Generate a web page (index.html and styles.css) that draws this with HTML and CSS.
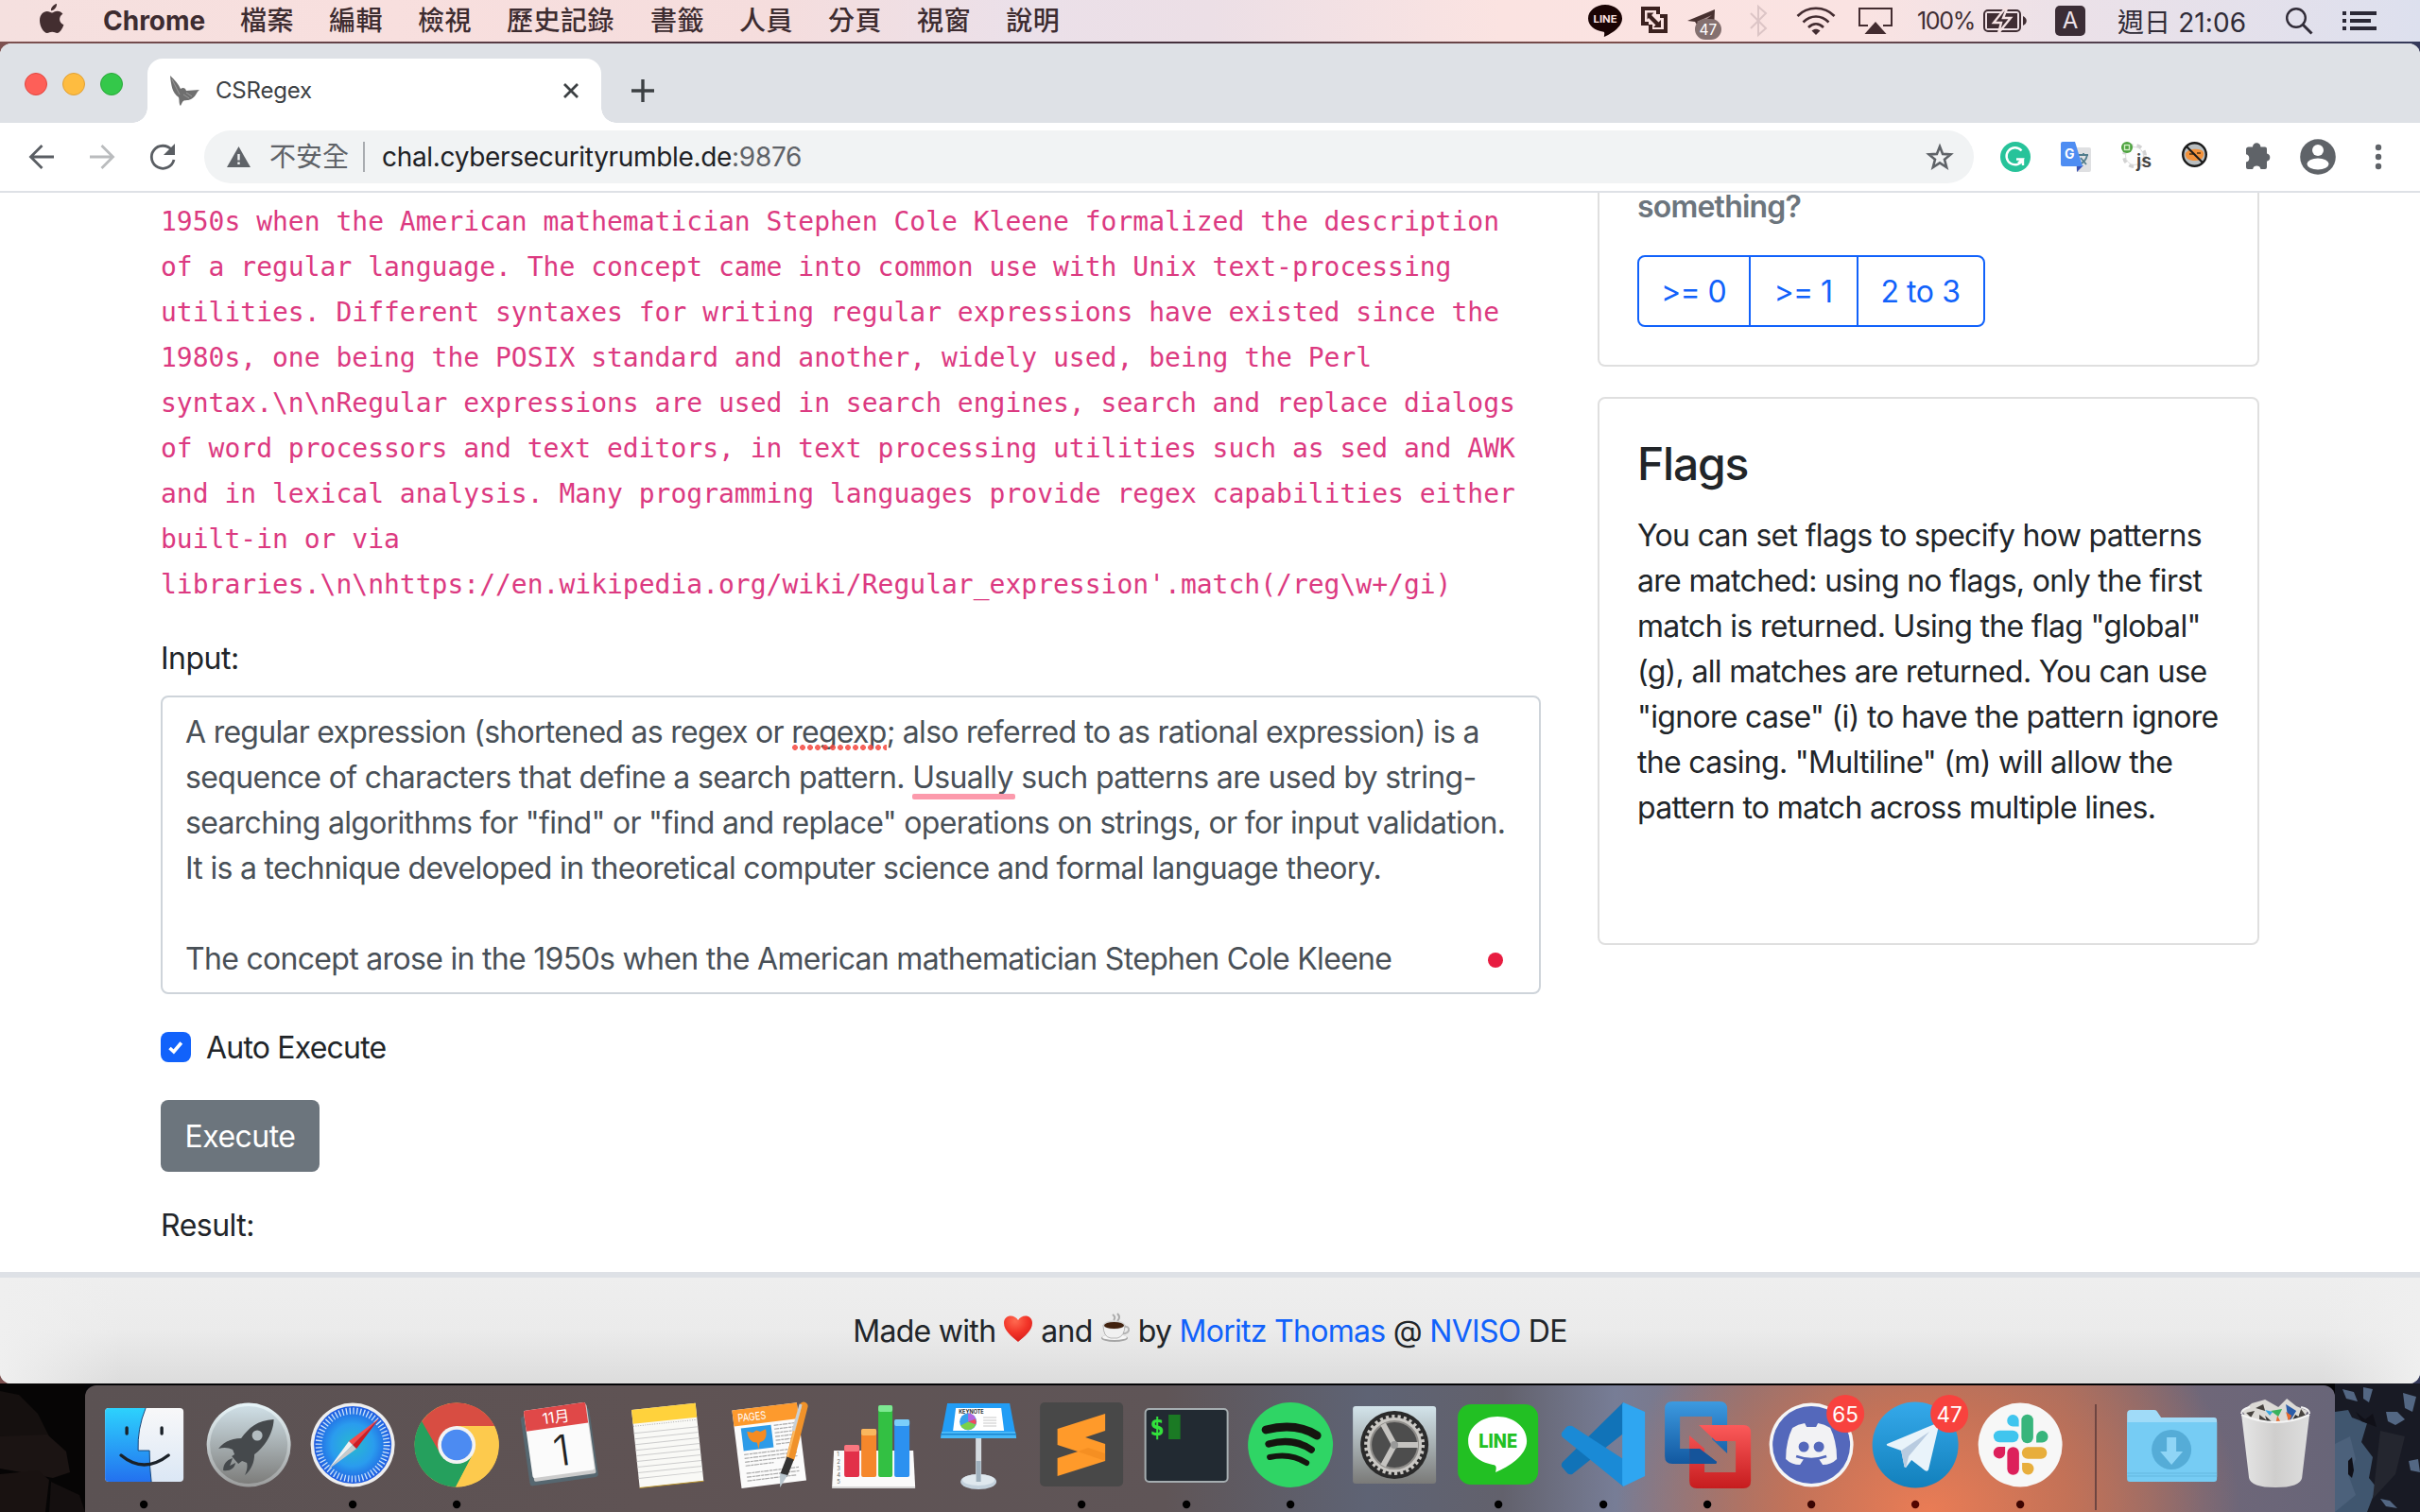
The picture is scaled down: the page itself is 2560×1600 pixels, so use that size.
FILE: index.html
```html
<!DOCTYPE html>
<html lang="zh-Hant">
<head>
<meta charset="utf-8">
<title>CSRegex</title>
<link rel="stylesheet" href="styles.css">
</head>
<body>
<header class="menubar">
  <svg class="apple" viewBox="0 0 26 32"><path d="M18 0c.4 3.200-2.600 7.400-6 7.300C11.600 4 14.800.600 18 0zM13 9.500c1.400 0 3-1.700 5.800-1.700 2.200 0 4.300 1.200 5.600 3-4.900 3-4.100 9.600 1 11.500C24 26.500 21.200 31 18.500 31c-2 0-2.900-1.200-5.300-1.200S9.700 31 7.900 31C4.300 31 0 24 0 17.800 0 11.500 3.900 8 7.700 8c2.400 0 4 1.500 5.300 1.500z"/></svg>
  <b class="app-name">Chrome</b>
  <nav class="menus"><span>檔案</span><span>編輯</span><span>檢視</span><span class="history">歷史記錄</span><span>書籤</span><span>人員</span><span>分頁</span><span>視窗</span><span>說明</span></nav>
  <div class="status">
    <svg class="s-line" viewBox="0 0 36 34"><path fill="#1a0404" d="M18 0C8 0 0 6.500 0 14.500 0 22 7 27.500 16.500 28.800c1 .2.800 2 .3 5.200C24 31 36 24 36 14.500 36 6.500 28 0 18 0z"/><text x="18" y="18.500" font-size="11" font-weight="700" text-anchor="middle" fill="#fbe3e1" textLength="25" lengthAdjust="spacingAndGlyphs">LINE</text></svg>
    <svg class="s-vm" viewBox="0 0 28 30"><g fill="none" stroke="#3b211f" stroke-width="4"><path d="M18 8V2H2v16h6M20 10h6v16H10v-7"/></g><path fill="#3b211f" d="M6.500 6.500h7L11 9l7.500 7.500L21 14v8h-8l2.500-2.500L8 12l-1.500 1.500z"/></svg>
    <svg class="s-tg" viewBox="0 0 38 34"><path fill="#47302f" d="M0 12L29 0l-1 22-9-6-6-3-3 3-2-3z"/><path d="M10 13l16-7-12 9" fill="#a98f8f"/><rect x="8" y="10" width="28" height="22" rx="11" fill="#84706f"/><text x="22" y="26.500" font-size="15.500" text-anchor="middle" fill="#fff">47</text></svg>
    <svg class="s-bt" viewBox="0 0 20 32" fill="none" stroke="#dcc5c6" stroke-width="2"><path d="M1 8l16 16-8 7V1l8 7L1 24"/></svg>
    <svg class="s-wifi" viewBox="0 0 42 30" fill="none" stroke="#432c30" stroke-width="2.600"><path d="M1.500 10C12-1 30-1 40.500 10M7.500 16.500c8-8 19-8 27 0M13 22c5-5 11-5 16 0"/><path stroke="none" fill="#432c30" d="M16.500 25.500c3-2.500 6-2.500 9 0L21 30z"/></svg>
    <svg class="s-air" viewBox="0 0 36 28"><path fill="none" stroke="#432c30" stroke-width="2" d="M10 19H1V1h34v18h-9"/><path fill="#432c30" d="M18 15L29.500 28h-23z"/></svg>
    <span class="pct">100%</span>
    <svg class="s-bat" viewBox="0 0 46 24"><rect x="1" y="1" width="38" height="22" rx="4" fill="none" stroke="#3f2d33" stroke-width="2"/><path fill="#3f2d33" d="M4 4h32v16H4zM42 7c5 2 5 8 0 10z"/><path d="M23-1L11 14h8l-3 11L29 9h-8l4-10z" fill="#3f2d33" stroke="#f5e2e3" stroke-width="2.400"/></svg>
    <span class="ime">A</span>
    <span class="clock">週日 21:06</span>
    <svg class="s-find" viewBox="0 0 30 28" fill="none" stroke="#302b37" stroke-width="2.400"><circle cx="11" cy="11" r="9.800"/><path d="M18 18l9.500 9.500" stroke-width="3"/></svg>
    <svg class="s-list" viewBox="0 0 36 20" fill="#2a2836"><path d="M0 0h4v4H0zM8 0h28v4H8zM0 8h4v4H0zM8 8h22v4H8zM0 16h4v4H0zM8 16h28v4H8z"/></svg>
  </div>
</header>

<main class="window">
  <div class="tabstrip">
    <div class="lights"><i class="red"></i><i class="amber"></i><i class="green"></i></div>
    <div class="tab">
      <svg class="favicon" viewBox="0 0 32 32"><path fill="#6f6f6f" d="M0 0c5 5 9 9 11 14 3-2 5-1 6 2l14-1c-4 3-3 7-9 10-4 2-7 0-9 3l-2 4c-2-2-1-6-2-9C2 18 1 10 0 0z"/><path d="M2 4l8 16M14 20l6 4M17 18l6 4" stroke="#999" fill="none"/></svg>
      <span class="tab-title">CSRegex</span>
      <svg class="close" viewBox="0 0 16 16"><path d="M1 1l14 14M15 1L1 15"/></svg>
    </div>
    <svg class="newtab" viewBox="0 0 24 24"><path d="M12 0v24M0 12h24"/></svg>
  </div>
  <div class="toolbar">
    <svg class="nav-ic" viewBox="0 0 28 28" stroke="#5a5e63"><path d="M27 14H3M14.500 2L2.500 14l12 12"/></svg>
    <svg class="nav-ic" viewBox="0 0 28 28" stroke="#babcbe"><path d="M1 14h24M13.500 2l12 12-12 12"/></svg>
    <svg class="nav-ic" viewBox="0 0 28 28" stroke="#5a5e63"><path d="M23.500 6.500A12 12 0 1 0 26 17"/><path d="M27 0v12H15z" fill="#5a5e63" stroke="none"/></svg>
    <div class="omnibox">
      <svg class="warn" viewBox="0 0 25 22"><path fill="#5f6368" d="M12.500 0L25 22H0z"/><path stroke="#f1f3f4" stroke-width="2.400" d="M12.500 8v6.500M12.500 16.500v2.600"/></svg>
      <span class="insecure">不安全</span><i class="sep"></i>
      <span class="url">chal.cybersecurityrumble.de<em>:9876</em></span>
      <svg class="star" viewBox="0 0 30 28"><path fill="none" stroke="#5f6368" stroke-width="2.600" d="M15 3l3.100 7.900 8.400.5-6.500 5.400 2.200 8.200-7.200-4.600L7.800 25l2.200-8.200-6.500-5.400 8.400-.5z"/></svg>
    </div>
    <div class="extensions">
      <svg viewBox="0 0 32 32"><circle cx="16" cy="16" r="16" fill="#27c39a"/><path fill="none" stroke="#fff" stroke-width="2.400" d="M22.500 9.500a9 9 0 1 0 1.500 9h-7M24 18.500V25M24 18.500l-5 4"/></svg>
      <svg viewBox="0 0 32 32"><path fill="#dfe0e2" d="M12 6h18q2 0 2 2v22q0 2-2 2H17z"/><path stroke="#527d8c" stroke-width="1.800" fill="none" d="M19 14h10M24 12v2M28 14c-1 5-4 8-8 10M21 17l6 7"/><path fill="#3a51b5" d="M17 25h7l-7 7z"/><path fill="#4e8df2" d="M2 0h13l8 26H2q-2 0-2-2V2q0-2 2-2z"/><text x="4" y="18" font-size="14" font-weight="700" fill="#fff">G</text></svg>
      <svg viewBox="0 0 32 32"><circle cx="14" cy="15" r="11" fill="#fff" stroke="#d2d2d2" stroke-width="4" stroke-dasharray="5 4"/><circle cx="14" cy="15" r="9.500" fill="#fdfdfd" stroke="#ddd"/><circle cx="6" cy="6" r="6" fill="#4da33f"/><rect x="3.500" y="3.500" width="5" height="5" fill="none" stroke="#d5f0c8" stroke-width="1.400"/><text x="16" y="27" font-size="19" font-weight="600" fill="#444" textLength="16" lengthAdjust="spacingAndGlyphs">js</text></svg>
      <svg viewBox="0 0 32 32"><circle cx="13.500" cy="13.500" r="12" fill="#b9bec0"/><path fill="#f3923b" d="M4 12c3-5 16-6 19-1 1 5-2 9-9 9-6 0-11-2-10-8z"/><path d="M8 13h4M16 12h4" stroke="#7c4a1a" stroke-width="2"/><circle cx="13.500" cy="13.500" r="12.300" fill="none" stroke="#1b1b1b" stroke-width="2.400"/><path d="M4.500 4.500l18 18" stroke="#1b1b1b" stroke-width="2.200"/></svg>
      <svg class="puzzle" viewBox="0 0 32 32"><path fill="#5f6368" d="M4.500 5.500H9a4.200 4.200 0 0 1 8.400 0H22q2 0 2 2v5a4.200 4.200 0 0 1 0 8.200V27q0 2-2 2h-4.500a4.300 4.300 0 0 0-8.400 0H4q-2 0-2-2v-5.500a4.200 4.200 0 0 0 0-8.200V7.500q.500-2 2.500-2z"/></svg>
      <svg class="avatar" viewBox="0 0 38 38"><circle cx="19" cy="19" r="18.800" fill="#5f6368"/><circle cx="19" cy="12" r="6" fill="#fff"/><ellipse cx="19" cy="26.500" rx="11.500" ry="6" fill="#fff"/></svg>
      <svg class="dots" viewBox="0 0 8 28" fill="#5f6368"><circle cx="4" cy="4" r="3.200"/><circle cx="4" cy="14" r="3.200"/><circle cx="4" cy="24" r="3.200"/></svg>
    </div>
  </div>

  <div class="page">
    <section class="editor">
      <code class="expr">1950s when the American mathematician Stephen Cole Kleene formalized the description<br>of a regular language. The concept came into common use with Unix text-processing<br>utilities. Different syntaxes for writing regular expressions have existed since the<br>1980s, one being the POSIX standard and another, widely used, being the Perl<br>syntax.\n\nRegular expressions are used in search engines, search and replace dialogs<br>of word processors and text editors, in text processing utilities such as sed and AWK<br>and in lexical analysis. Many programming languages provide regex capabilities either<br>built-in or via<br>libraries.\n\nhttps://en.wikipedia.org/wiki/Regular_expression'.match(/reg\w+/gi)</code>
      <label class="input-label">Input:</label>
      <div class="textarea"><p class="tight">A regular expression (shortened as regex or <span class="spell">regexp</span>; also referred to as rational expression) is a</p><p class="looser">sequence of characters that define a search pattern. <span class="hint">Usually</span> such patterns are used by string-</p><p>searching algorithms for "find" or "find and replace" operations on strings, or for input validation.</p><p>It is a technique developed in theoretical computer science and formal language theory.</p><p>&nbsp;</p><p>The concept arose in the 1950s when the American mathematician Stephen Cole Kleene</p><p class="last">formalized the description of a regular language. The concept came into common use with</p><i class="grammar-dot"></i></div>
      <div class="check-row"><span class="checkbox"><svg viewBox="0 0 32 32"><path d="M9.500 17l4.300 4 8-9.500" fill="none" stroke="#fff" stroke-width="3.600"/></svg></span><span class="check-label">Auto Execute</span></div>
      <button class="execute">Execute</button>
      <div class="result">Result:</div>
    </section>
    <aside class="side">
      <div class="card card-cut">
        <h6>something?</h6>
        <div class="btn-group"><button>&gt;= 0</button><button>&gt;= 1</button><button>2 to 3</button></div>
      </div>
      <div class="card card-flags">
        <h4>Flags</h4>
        <p>You can set flags to specify how patterns<br>are matched: using no flags, only the first<br>match is returned. Using the flag "global"<br>(g), all matches are returned. You can use<br>"ignore case" (i) to have the pattern ignore<br>the casing. "Multiline" (m) will allow the<br>pattern to match across multiple lines.</p>
      </div>
    </aside>
  </div>
  <footer class="foot">
    <span>Made with</span>
    <svg class="heart" viewBox="0 0 32 32"><defs><radialGradient id="hg" cx=".4" cy=".2" r=".9"><stop offset="0" stop-color="#ff6a50"/><stop offset=".5" stop-color="#f23428"/><stop offset="1" stop-color="#d01818"/></radialGradient></defs><path fill="url(#hg)" d="M16 30C9 24 1 18 1 10 1 1 12 0 16 7c4-7 15-6 15 3 0 8-8 14-15 20z"/></svg>
    <span>and</span>
    <svg class="cup" viewBox="0 0 32 32"><path d="M13 1q4 3 1 6M18 0q4 4 0 8" stroke="#aaa" stroke-width="2" fill="none"/><ellipse cx="15" cy="26" rx="14" ry="4" fill="#a5a5a5"/><ellipse cx="15" cy="25" rx="13" ry="3" fill="#f7f7f7"/><path d="M24 14q7-1 6 4-2 4-8 3" fill="none" stroke="#b5b5b5" stroke-width="2"/><path fill="#f1f1f1" stroke="#a5a5a5" stroke-width=".8" d="M3 12q0 13 8 14h7q8-2 8-14z"/><ellipse cx="14.500" cy="12" rx="11.500" ry="4.500" fill="#d0d0d0"/><ellipse cx="14.500" cy="12.500" rx="10.500" ry="3.600" fill="#41220f"/></svg>
    <span>by <a>Moritz Thomas</a> @ <a>NVISO</a> DE</span>
  </footer>
</main>

<div class="desktop">
  <svg class="rocks rocks-left" viewBox="0 0 90 136"><rect width="90" height="136" fill="#060505"/><path fill="#15100f" d="M0 8l20 4 20 20 12 24H0z"/><path fill="#1b1413" d="M0 56l50-2 20 18 4 22-18 6-56-10z"/><path fill="#191211" d="M0 96l40-4 12 10-4 34H0z"/><path fill="#140f0f" d="M54 104l30 14 6 18H52z"/></svg>
  <div class="dock">
    <svg class="app" viewBox="0 0 110 134"><defs><linearGradient id="f1" x2="0" y2="1"><stop stop-color="#2dd2fd"/><stop offset="1" stop-color="#2371ef"/></linearGradient><linearGradient id="f2" x2="0" y2="1"><stop stop-color="#f8f8f9"/><stop offset="1" stop-color="#dbe7f5"/></linearGradient></defs><rect x="14" y="24" width="83" height="78" rx="4" fill="url(#f2)"/><path fill="url(#f1)" d="M18 24h39q-9 22-8 45h12q0 18 2 33H18q-4 0-4-4V28q0-4 4-4z"/><path fill="none" stroke="#17477a" stroke-width="1" d="M57 24q-9 22-8 45h12q0 18 2 33"/><path stroke="#1a2128" stroke-width="3.400" stroke-linecap="round" fill="none" d="M37 45v6M74 45v6M31 74q24 20 50 0"/><circle cx="55" cy="126" r="4.200"/></svg>
    <svg class="app" viewBox="0 0 110 134"><defs><linearGradient id="l1" x2="0" y2="1"><stop stop-color="#cfdfe6"/><stop offset="1" stop-color="#7d7d7b"/></linearGradient><linearGradient id="l2" x2="0" y2="1"><stop stop-color="#e8f6fa"/><stop offset="1" stop-color="#9b9c9c"/></linearGradient></defs><circle cx="56" cy="63" r="44.500" fill="url(#l2)"/><circle cx="56" cy="63" r="41" fill="url(#l1)"/><path fill="#45494c" d="M82.500 36C65 37 56 45 48 56c-9 0-18 3-24 11 6-2 11-1 15 1l2 5-3 2 7 8 4-3 5 2c1 4 0 8-2 13 7-6 10-14 10-22 11-8 20-22 20.500-37zM39 77c-7 2-10 7-10 13 7 1 12-2 13-8l-6 3z"/><circle cx="65" cy="53" r="5.500" fill="#b3bdc1"/></svg>
    <svg class="app" viewBox="0 0 110 134"><defs><radialGradient id="s1"><stop stop-color="#28b9ce"/><stop offset=".55" stop-color="#2a9cee"/><stop offset="1" stop-color="#1e5ae0"/></radialGradient></defs><circle cx="55" cy="63" r="44.500" fill="#eee"/><circle cx="55" cy="63" r="41" fill="url(#s1)"/><circle cx="55" cy="63" r="36" fill="none" stroke="#cfe4fa" stroke-width="7" stroke-dasharray="1.300 2.470"/><path fill="#f0f0f0" d="M29 89l22-30 4 4z"/><path fill="#c9c9c9" d="M29 89l26-26 4 4z"/><path fill="#f84a4a" d="M83 35L51 59l4 4z"/><path fill="#d11b22" d="M83 35L59 67l-4-4z"/><circle cx="55" cy="126" r="4.200"/></svg>
    <svg class="app" viewBox="0 0 110 134"><circle cx="55" cy="63" r="44.500" fill="#fdca4d"/><path fill="#d84d42" d="M16.500 41A44.500 44.500 0 0 1 95 43H55L38 73z"/><path fill="#25a05d" d="M18 38a44.500 44.500 0 0 0 36 69.500L71 75 38 73z"/><path fill="#fdca4d" d="M54 107.500L72 73l-1-30h24a44.500 44.500 0 0 1-41 64.500z"/><circle cx="55" cy="63" r="20" fill="#f3f3f3"/><circle cx="55" cy="63" r="16.300" fill="#4c8bf2"/><circle cx="55" cy="126" r="4.200"/></svg>
    <svg class="app" viewBox="0 0 110 134"><g transform="translate(-1 0) rotate(-8 55 63)"><rect x="18" y="28" width="73" height="74" rx="3" fill="#566770"/><rect x="23" y="24" width="66" height="74" rx="2" fill="#ccc"/><rect x="22" y="22" width="66" height="72" rx="2" fill="#fbfbfb"/><path fill="#e04848" d="M24 22h62q2 0 2 2v20H22V24q0-2 2-2z"/><text x="55" y="39" font-size="16" text-anchor="middle" fill="#fff">11月</text><text x="56" y="85" font-size="45" font-weight="300" text-anchor="middle" fill="#222">1</text></g></svg>
    <svg class="app" viewBox="0 0 110 134"><g transform="translate(4 0) rotate(-6 55 63)"><rect x="20" y="22" width="68" height="83" fill="#f9f9f6"/><rect x="20" y="22" width="68" height="15" fill="#ffd23c"/><path d="M20 39.500h68" stroke="#aaa" stroke-dasharray="1 1.500"/><path stroke="#ccc" d="M20 47h68M20 53h68M20 59h68M20 65h68M20 71h68M20 77h68M20 83h68M20 89h68M20 95h68"/><path d="M20 105h68" stroke="#b7922a"/></g></svg>
    <svg class="app" viewBox="0 0 110 134"><g transform="rotate(-7 55 63)"><rect x="20" y="22" width="69" height="83" fill="#fbfbfb"/><rect x="20" y="22" width="69" height="17" fill="#fd9a2d"/><text x="25" y="35" font-size="11.500" fill="#fff" textLength="30" lengthAdjust="spacingAndGlyphs">PAGES</text><rect x="27" y="42" width="32" height="24" fill="#2d9be8"/><path fill="#f58b22" d="M33 46l6 2 4-2 4 2 6-2q1 12-8 13l-2 7-1-7q-9-1-9-13z"/><path stroke="#aaa" stroke-width="1.200" stroke-dasharray="5 .8 3 .6" d="M62 43h22M62 47h22M62 51h22M62 55h22M62 59h20M62 63h18M27 70h56M27 74h56M27 78h56M27 82h30M27 90h56M27 94h56M27 98h52"/></g><path stroke="#f0922a" stroke-width="9" stroke-linecap="round" d="M91 22L77 77"/><path stroke="#fdbb63" stroke-width="2" d="M88 22L74 76"/><path stroke="#c8d0d6" stroke-width="3" d="M88 20L80 48"/><path stroke="#333" stroke-width="8" d="M77 77L70 95"/><path fill="#b9c6ce" d="M66 93l8 2-8 13z"/></svg>
    <svg class="app" viewBox="0 0 110 134"><path fill="#fafafa" d="M13 69h84l2 38H11z"/><path fill="#d5d5d5" d="M11 107h88v2H11z"/><g font-size="6" fill="#666"><text x="16" y="75">1</text><text x="16" y="83">2</text><text x="16" y="90">3</text><text x="16" y="97">4</text><text x="16" y="104">5</text></g><g><rect x="24" y="63" width="16" height="34" rx="2" fill="#e23049"/><rect x="24" y="63" width="16" height="7" rx="2" fill="#f87780"/><rect x="42" y="46" width="16" height="51" rx="2" fill="#f5872b"/><rect x="42" y="46" width="16" height="7" rx="2" fill="#f9b75e"/><rect x="60" y="21" width="15" height="76" rx="2" fill="#33c043"/><rect x="60" y="21" width="15" height="7" rx="2" fill="#7de892"/><rect x="77" y="36" width="16" height="61" rx="2" fill="#2c91f0"/><rect x="77" y="36" width="16" height="7" rx="2" fill="#7bcefa"/></g></svg>
    <svg class="app" viewBox="0 0 110 134"><g transform="translate(1 0)"><path fill="#d5dbe0" d="M52 56h6v50h-6z"/><ellipse cx="55" cy="102" rx="19" ry="8" fill="#c3d1dc"/><ellipse cx="55" cy="100" rx="17" ry="6" fill="#dfe8ee"/><path fill="#9fb0bd" d="M52.500 80h5v22h-5z"/><path fill="#229df5" d="M22 19h66l7 37H15z"/><path fill="#47b8f8" d="M16 49h78l1 7H15z"/><path fill="#1b86d1" d="M15 51h80v1.500H15z"/><path fill="#fff" d="M31 24h48l3 24H28z"/><text x="34" y="29.500" font-size="5.500" font-weight="700" fill="#333">KEYNOTE</text><circle cx="44" cy="38.500" r="9" fill="#39a0ec"/><path fill="#b366e0" d="M44 38.500v-9a9 9 0 0 1 8 6z"/><path fill="#f2495c" d="M44 38.500l8-3a9 9 0 0 1 0 6z"/><path fill="#7bd04a" d="M44 38.500l8 3a9 9 0 0 1-16 1z"/><path stroke="#c8c8c8" stroke-width="1.200" d="M60 34h14M60 37h14M60 40h14M60 43h14"/></g></svg>
    <svg class="app" viewBox="0 0 110 134"><rect x="11" y="18" width="88" height="89" rx="5" fill="#484848"/><path fill="#ff9a2a" d="M29.500 46L80 30v18L59 55l21 7v18L29.500 96V77L51 70 29.500 63z"/><path fill="#e27c14" d="M51 70l29 10V72L62 66z" opacity=".35"/><circle cx="55" cy="126" r="4.200"/></svg>
    <svg class="app" viewBox="0 0 110 134"><rect x="11.500" y="25" width="87" height="77" rx="4" fill="#222a32" stroke="#a5adb0" stroke-width="2"/><text x="16" y="53" class="mono" font-size="26" font-weight="700" fill="#33e23c">$</text><rect x="36" y="31" width="12.500" height="26" fill="#1b7a24"/><circle cx="55" cy="126" r="4.200"/></svg>
    <svg class="app" viewBox="0 0 110 134"><circle cx="55" cy="63" r="45" fill="#2fd565"/><path fill="none" stroke="#15150f" stroke-linecap="round" d="M29 47q32-8 54 6" stroke-width="9"/><path fill="none" stroke="#15150f" stroke-linecap="round" stroke-width="7.500" d="M32 62q26-7 45 6"/><path fill="none" stroke="#15150f" stroke-linecap="round" stroke-width="6" d="M33 76q22-5 39 6"/><circle cx="55" cy="126" r="4.200"/></svg>
    <svg class="app" viewBox="0 0 110 134"><defs><linearGradient id="p1" x2="0" y2="1"><stop stop-color="#d3e4eb"/><stop offset="1" stop-color="#7a7a78"/></linearGradient></defs><rect x="11" y="22" width="88" height="82" rx="3" fill="url(#p1)"/><circle cx="55" cy="63" r="36" fill="#2a2a2a"/><circle cx="55" cy="63" r="27" fill="#4d4d4d" stroke="#c9c7c3" stroke-width="4"/><circle cx="55" cy="63" r="29.500" fill="none" stroke="#c9c7c3" stroke-width="5" stroke-dasharray="3.100 3.080"/><circle cx="55" cy="63" r="25" fill="none" stroke="#8f8d8a" stroke-width="2"/><path stroke="#c5c3c0" stroke-width="6" d="M55 63h25M55 63L43 41M55 63L43 85"/><circle cx="55" cy="63" r="4" fill="#999"/></svg>
    <svg class="app" viewBox="0 0 110 134"><rect x="12" y="20" width="85" height="85" rx="14" fill="#22c023"/><path fill="#fff" d="M54 33c-17 0-31 11-31 26 0 13 11 22 26 25 4 .5 4 2 3 8 14-6 33-18 33-33 0-15-14-26-31-26z"/><text x="54.500" y="66" font-size="20" font-weight="800" text-anchor="middle" fill="#22c023" textLength="41" lengthAdjust="spacingAndGlyphs">LINE</text><circle cx="55" cy="126" r="4.200"/></svg>
    <svg class="app" viewBox="0 0 110 134"><path fill="#1173b8" d="M76 18v33L22 94q-4 1-6-2l-5-6q-1-3 1-5z"/><path fill="#1a8ad6" d="M76 107V78L22 43q-4-1-6 1l-5 6q-1 3 1 5z"/><path fill="#2fa6f1" d="M76 18l23 10V96l-23 11-1-2V20z"/><circle cx="55" cy="126" r="4.200"/></svg>
    <svg class="app" viewBox="0 0 110 134"><defs><linearGradient id="v1" x2="0" y2="1"><stop stop-color="#3d9ae0"/><stop offset="1" stop-color="#1258a0"/></linearGradient><linearGradient id="v2" x2="0" y2="1"><stop stop-color="#fb5a5a"/><stop offset="1" stop-color="#c61c1e"/></linearGradient></defs><path fill="url(#v1)" d="M18 17h50q8 0 8 8v47L60 57V33H26v34h21l18 14-1 2H18q-8 0-8-8V25q0-8 8-8z"/><path fill="url(#v2)" d="M46 42h47q8 0 8 8v51q0 8-8 8H44q-8 0-8-8V53l16 14v25h33V59H64z"/><path fill="#15549a" d="M36 67h11l18 14-1 2H36z"/><circle cx="55" cy="126" r="4.200"/></svg>
    <svg class="app" viewBox="0 0 110 134"><circle cx="55" cy="63" r="44.500" fill="#f5f5f5"/><circle cx="55" cy="63" r="41" fill="#5468bb"/><path fill="#f2f2f4" d="M35 45q6-4 13-5l2 4h10l2-4q7 1 13 5 7 14 7 33-6 6-15 6l-4-6q-8 2-16 0l-4 6q-9 0-15-6 0-19 7-33z"/><path fill="none" stroke="#5468bb" stroke-width="2.500" d="M39 75q16 6 32 0"/><circle cx="47" cy="65" r="5.500" fill="#5468bb"/><circle cx="63" cy="65" r="5.500" fill="#5468bb"/><circle cx="91" cy="30" r="20" fill="#f8423e"/><text x="91" y="38.500" font-size="22.500" text-anchor="middle" fill="#fff">65</text><circle cx="55" cy="126" r="4.200" fill="#3b0603"/></svg>
    <svg class="app" viewBox="0 0 110 134"><defs><linearGradient id="t1" x2="0" y2="1"><stop stop-color="#35a9ea"/><stop offset="1" stop-color="#1280bc"/></linearGradient></defs><circle cx="55" cy="63" r="45.500" fill="url(#t1)"/><path fill="#e9f3fa" d="M25 62L78 40q3-1 2 2L69 89q-1 3-4 1L51 79l-6 8q-2 0-2-3l-3-15-14-5q-2-1-1-2z"/><path fill="#b8cbe0" d="M40 69l30-20-22 26-3 12q-2 0-2-3z"/><circle cx="91" cy="30" r="20" fill="#f8423e"/><text x="91" y="38.500" font-size="22.500" text-anchor="middle" fill="#fff">47</text><circle cx="55" cy="126" r="4.200" fill="#520500"/></svg>
    <svg class="app" viewBox="0 0 110 134"><circle cx="55" cy="63" r="44.500" fill="#f7f7f7"/><g stroke-width="12.500" stroke-linecap="round"><path stroke="#40c5ee" d="M33 54h14"/><path stroke="#38b57c" d="M62.500 37v18"/><path stroke="#e8ae3c" d="M63 71.500h14"/><path stroke="#dd205b" d="M47.500 71.500v17"/></g><path fill="#40c5ee" d="M53.500 43.500V37a6.200 6.200 0 1 0-6.200 6.500z"/><path fill="#38b57c" d="M72 60.500V54a6.200 6.200 0 1 1 6.200 6.500z"/><path fill="#e8ae3c" d="M57 82v6.500A6.200 6.200 0 1 0 63.200 82z"/><path fill="#dd205b" d="M39 65h-6.500A6.200 6.200 0 1 0 39 71.500z"/><circle cx="55" cy="126" r="4.200" fill="#3d0502"/></svg>
    <i class="dock-sep"></i>
    <svg class="app" viewBox="0 0 110 134"><path fill="#a0dbf8" d="M12 26h25q2 0 3 2l4 6h56q3 0 3 3v60H8V30q0-4 4-4z"/><path fill="#76ccf4" d="M8 39h95v60q0 3-3 3H11q-3 0-3-3z"/><path d="M8 93h95M8 96h95" stroke="#63b7df" stroke-width="1"/><circle cx="55" cy="68" r="21" fill="#55acd7"/><path fill="#8fd5f6" d="M50 55h10v15h7L55 84 43 70h7z"/></svg>
    <svg class="app" viewBox="0 0 110 134"><defs><linearGradient id="b1"><stop stop-color="#e6e6e6"/><stop offset=".5" stop-color="#cfcecd"/><stop offset="1" stop-color="#dedede"/></linearGradient></defs><path fill="#dcdad6" d="M20 27l10-8 14-4 14 8 9-9 10 8 12 5-8 14H28z"/><path fill="#47433f" d="M24 29l9-2-4 7zM38 31l13 10H38zM82 25l5 7-9 5zM34 24l8-4 2 7z"/><path fill="#2a5ca8" d="M66 20l11 7-8 13z"/><path fill="#38b25d" d="M50 27l12-2-4 8z"/><path fill="#3aa7e0" d="M44 26l8 2-3 4z"/><path fill="#e46a2f" d="M66 28l6 4-3 7zM57 32l4 8-6 1z"/><path fill="#333" d="M44 32l11 10h-8zM76 31l8 5-13 4z"/><path fill="url(#b1)" d="M19 31q36 16 72 0l-8 67q-2 10-28 10t-28-10z"/><path d="M19 30q0-5 9-7M91 30q0-5-9-7" stroke="#f1f1f1" stroke-width="2" fill="none"/><path d="M19 31q36 16 72 0" stroke="#f5f5f5" fill="none" stroke-width="2"/></svg>
  </div>
  <svg class="rocks rocks-right" viewBox="0 0 90 136"><rect width="90" height="136" fill="#181a24"/><path fill="#40566f" d="M0 30l14-2 4 8 16 6-6 20 12 16-4 22 8 10-10 26H0z"/><path fill="#4c617b" d="M0 64l16-8 6 24-8 16 8 22-22 18z"/><path fill="#536783" d="M8 6l12 3 4 10-12-3zM30 4l10 2-4 14-6-4zM54 30l12 0 8 8-10 6-8-4zM72 10l14 4-4 16-8-4zM78 82l10-2 2 14-10-2zM48 122l10 2 8 8-12-2z"/><path fill="#101018" d="M14 82l4-4 2 14-2 8-4-4zM22 30l10 8 8-6 4 14-16-6z"/><path fill="#24262f" d="M48 50l26 6-10 40-24 26z"/></svg>
</div>
</body>
</html>
```
FILE: styles.css
```css
* { box-sizing: border-box; }
body {
  margin: 0; width: 2560px; height: 1600px; overflow: hidden;
  display: flex; flex-direction: column;
  font-family: Inter, "Noto Sans CJK TC", sans-serif;
  background: linear-gradient(90deg, #7d5150, #45303d 30%, #45303d 50%, #7d4f4c 66%, #55404c 85%, #34395a);
  color: #212529;
}
svg { display: block; flex: none; overflow: visible; }
p, h4, h6 { margin: 0; }

.menubar {
  height: 44px; flex: none; display: flex; align-items: center; padding-left: 42px;
  background: linear-gradient(90deg, #f5e0df, #f8dfde 16%, #f5dddd 32%, #ebe0e9 42%, #ecdfe6 50%, #fbe3e1 62%, #fae3e2 77%, #ece1e8 85%, #dde0ee);
  color: #3d2c30; font-size: 28px; white-space: nowrap;
}
.apple { width: 26px; height: 32px; margin-top: -5px; fill: #432e30; }
.app-name { margin-left: 41px; width: 145px; letter-spacing: 0; }
.menus { display: flex; gap: 37px; letter-spacing: .5px; font-weight: 500; line-height: 44px; }
.history { margin-right: 1px; }
.status { margin-left: auto; width: 880px; display: flex; align-items: center; color: #3f2d33; }
.status > * { flex: none; }
.status svg text { font-family: Inter, sans-serif; }
.s-line { width: 36px; height: 34px; }
.s-vm { width: 28px; height: 30px; margin-left: 20px; }
.s-tg { width: 38px; height: 34px; margin-left: 21px; margin-top: 10px; }
.s-bt { width: 20px; height: 32px; margin-left: 28px; }
.s-wifi { width: 42px; height: 30px; margin-left: 29px; }
.s-air { width: 36px; height: 28px; margin-left: 24px; }
.pct { font-size: 25px; margin-left: 26px; width: 70px; letter-spacing: -1.300px; }
.s-bat { width: 46px; height: 24px; }
.ime { width: 32px; height: 32px; margin-left: 30px; border-radius: 5px; background: #3b2d36; color: #ece1e8; font-size: 24px; line-height: 32px; text-align: center; }
.clock { margin-left: 34px; width: 178px; letter-spacing: .1px; color: #302b37; }
.s-find { width: 30px; height: 28px; }
.s-list { width: 36px; height: 20px; margin-left: 30px; }

.window { margin-top: 2px; height: 1418px; flex: none; display: flex; flex-direction: column; background: #fff; border-radius: 12px; overflow: hidden; }
.tabstrip { height: 84px; flex: none; display: flex; background: #dee1e6; padding-left: 26px; }
.lights { display: flex; gap: 16px; width: 130px; padding-top: 31px; }
.lights i { width: 24px; height: 24px; border-radius: 50%; border: 1px solid #e2463f; background: #fe5f58; }
.lights .amber { background: #febc40; border-color: #e0a035; }
.lights .green { background: #34c84a; border-color: #2aa83a; }
.tab { position: relative; width: 480px; height: 68px; margin-top: 16px; background: #fff; border-radius: 16px 16px 0 0; display: flex; align-items: center; padding: 0 24px; }
.tab::before, .tab::after { content: ""; position: absolute; bottom: 0; width: 16px; height: 16px; }
.tab::before { left: -16px; background: radial-gradient(circle at 0 0, #dee1e6 15.500px, #fff 16px); }
.tab::after { right: -16px; background: radial-gradient(circle at 100% 0, #dee1e6 15.500px, #fff 16px); }
.favicon { width: 32px; height: 32px; }
.tab-title { margin-left: 16px; font-size: 24px; letter-spacing: -.2px; line-height: 28px; color: #3c4043; }
.close { width: 16px; height: 16px; margin-left: auto; stroke: #3c4043; stroke-width: 2.800; }
.newtab { width: 24px; height: 24px; margin: 38px 0 0 32px; stroke: #3c4043; stroke-width: 3.400; }
.toolbar { height: 74px; flex: none; display: flex; align-items: center; padding: 0 38px 0 30px; border-bottom: 2px solid #dee1e6; }
.nav-ic { width: 28px; height: 28px; margin-right: 36px; fill: none; stroke-width: 2.800; }
.nav-ic + .nav-ic + .nav-ic { margin-right: 30px; }
.omnibox { flex: none; width: 1872px; height: 56px; border-radius: 28px; background: #f1f3f4; display: flex; align-items: center; padding: 0 21px 0 24px; font-size: 28px; white-space: nowrap; }
.warn { width: 25px; height: 22px; }
.insecure { margin-left: 20px; width: 84px; color: #5f6368; line-height: 40px; }
.sep { width: 2px; height: 32px; margin-left: 15px; background: #a9acb0; }
.url { margin-left: 18px; letter-spacing: -.32px; color: #202124; }
.url em { font-style: normal; color: #5f6368; }
.star { width: 30px; height: 28px; margin-left: auto; }
.extensions { display: flex; align-items: center; margin-left: 28px; gap: 32px; }
.extensions svg { width: 32px; height: 32px; }
.extensions .puzzle { margin-left: 2px; }
.extensions .avatar { width: 38px; height: 38px; margin-left: -5px; }
.extensions .dots { width: 8px; height: 28px; margin-left: 9px; }

.page { height: 1142px; flex: none; display: flex; padding: 6px 170px 0; gap: 60px; font-size: 32px; line-height: 48px; overflow: hidden; white-space: nowrap; }
.editor { width: 1460px; display: flex; flex-direction: column; align-items: flex-start; }
.expr { margin-top: 1px; font-family: "DejaVu Sans Mono", monospace; font-size: 28px; color: #dc3a81; }
.input-label { margin-top: 30px; letter-spacing: -.5px; }
.textarea { position: relative; width: 1460px; height: 316px; margin-top: 15px; padding: 13px 24px 0; border: 2px solid #ced4da; border-radius: 8px; overflow: hidden; color: #495057; letter-spacing: -.69px; }
.tight { letter-spacing: -.72px; }
.looser { letter-spacing: -.65px; }
.last { padding-top: 1px; }
.spell, .hint { position: relative; }
.spell::after { content: ""; position: absolute; left: 0; right: 0; bottom: 0; height: 6px; background: radial-gradient(circle, #f4483f 2.600px, transparent 3.200px) 0 0 / 8px 6px; opacity: .85; }
.hint::after { content: ""; position: absolute; left: 0; right: -2px; bottom: -4px; height: 6px; border-radius: 2px; background: #fc9aac; }
.grammar-dot { position: absolute; right: 38px; bottom: 26px; width: 16px; height: 16px; border-radius: 50%; background: #e81c40; }
.check-row { display: flex; align-items: center; gap: 16px; margin-top: 32px; letter-spacing: -.8px; }
.checkbox { width: 32px; height: 32px; border-radius: 8px; background: #1162fb; }
.check-label { padding-top: 2px; line-height: 46px; }
.execute { margin-top: 32px; width: 168px; height: 76px; border: 0; border-radius: 8px; background: #6c757d; color: #fff; font: 32px Inter, sans-serif; letter-spacing: -.55px; padding: 0; }
.result { margin-top: 33px; letter-spacing: -.5px; }

.side { width: 700px; }
.card { border: 2px solid #dfdfdf; border-radius: 8px; padding: 40px; }
.card-cut { margin-top: -10px; height: 188px; border-top: 0; border-radius: 0 0 8px 8px; padding-top: 0; }
.card-cut h6 { font-size: 32px; line-height: 38px; font-weight: 600; color: #6c757d; letter-spacing: -.8px; }
.btn-group { display: flex; margin-top: 32px; }
.btn-group button { width: 120px; height: 76px; padding: 0 1px 0 0; border: 2px solid #1162fb; background: #fff; color: #1162fb; font: 32px Inter, sans-serif; letter-spacing: -.6px; }
.btn-group button:nth-child(1) { border-radius: 8px 0 0 8px; }
.btn-group button:nth-child(2) { width: 116px; margin-left: -2px; }
.btn-group button:nth-child(3) { width: 136px; margin-left: -2px; border-radius: 0 8px 8px 0; letter-spacing: -.4px; }
.card-flags { margin-top: 32px; height: 580px; }
.card-flags h4 { font-size: 48px; line-height: 57px; font-weight: 500; margin-bottom: 24px; letter-spacing: -1.200px; }
.card-flags p { letter-spacing: -.68px; }

.foot { height: 118px; flex: none; border-top: 6px solid #dee1e6; display: flex; align-items: center; justify-content: center; gap: 8px; background: linear-gradient(90deg, #efefef, transparent 5%, transparent 96%, #efefef), linear-gradient(#eeeeee, #ebebeb 50%, #dcdcdc); font-size: 32px; letter-spacing: -.71px; }
.foot a { color: #1162fb; }
.heart, .cup { width: 32px; height: 32px; margin-top: -4px; }

.desktop { flex: 1; position: relative; display: flex; padding: 2px 90px 0; background: #050507; }
.rocks { position: absolute; top: 0; width: 90px; height: 136px; }
.rocks-left { left: 0; }
.rocks-right { right: 0; }
.dock {
  position: relative; width: 2380px; height: 134px; display: flex; padding-left: 7px; border-radius: 12px 12px 0 0;
  background: radial-gradient(ellipse 330px 260px at 1950px 134px, #ea7c55, rgba(205,115,84,.85) 45%, transparent),
    linear-gradient(90deg, #5b5253, #5f5354 25%, #5f5557 48%, #5e6374 57%, #62616c 63%, #777d96 68%, #80727c 74%, #8e6b68 88%, #6f6779 94%, #686578);
}
.app { width: 110.250px; height: 134px; font-family: Inter, "Noto Sans CJK TC", sans-serif; }
.mono { font-family: "DejaVu Sans Mono", monospace; }
.dock-sep { width: 2px; height: 112px; margin: 20px 24px 0; background: #6e4541; }
```
